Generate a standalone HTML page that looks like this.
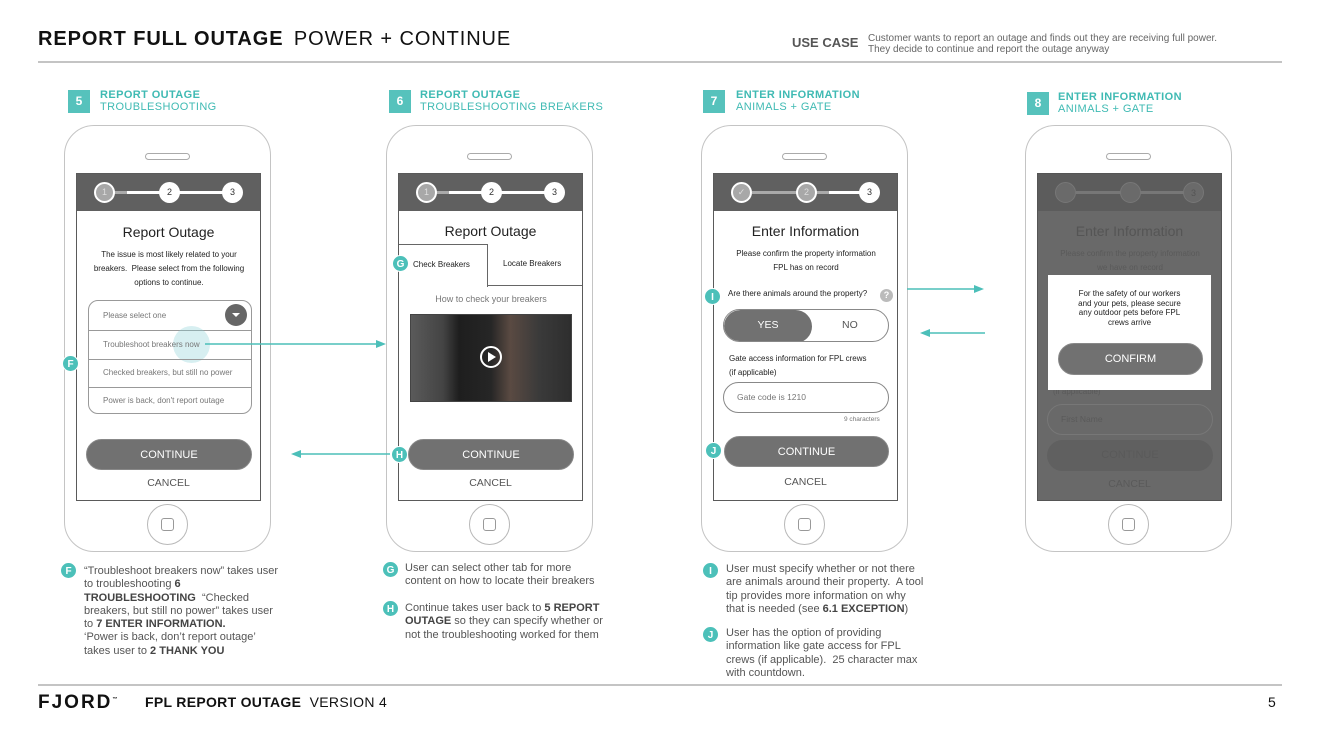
<!DOCTYPE html>
<html><head><meta charset="utf-8">
<style>
*{margin:0;padding:0;box-sizing:border-box}
body{width:1324px;height:745px;background:#fff;position:relative;overflow:hidden;font-family:"Liberation Sans",Arial,sans-serif;color:#333}
.a{position:absolute}
.c{text-align:center}
.sq{position:absolute;width:22px;height:23px;background:#56c2bc;color:#fff;font-weight:bold;font-size:12px;text-align:center;line-height:23px}
.hd{position:absolute;font-size:11px;line-height:12px;letter-spacing:.4px;color:#3fbab3}
.hd b{display:block}
.ph{position:absolute;top:125px;width:207px;height:427px;border:1px solid #c4c4c4;border-radius:30px}
.sp{position:absolute;top:153px;width:45px;height:7px;border:1px solid #aaa;border-radius:4px}
.hb{position:absolute;top:504px;width:41px;height:41px;border:1px solid #b8b8b8;border-radius:50%}
.hb i{position:absolute;left:13px;top:13px;width:13px;height:13px;border:1px solid #999;border-radius:3px}
.sc{position:absolute;top:173px;width:185px;height:328px;border:1px solid #5a5a5a;background:#fff;overflow:hidden}
.bar{position:absolute;left:0;top:0;width:100%;height:37px;background:#606060}
.st{position:absolute;top:8px;width:21px;height:21px;border-radius:50%;background:#fff;color:#333;font-size:9px;text-align:center;line-height:21px}
.st.g{background:#a8a8a8;color:#ddd;border:2px solid #fff;line-height:17px}
.ln{position:absolute;top:17px;height:3px;background:#fff}
.t{position:absolute;left:0;width:100%;text-align:center;font-size:14px;color:#222}
.s{position:absolute;font-size:8px;color:#222;line-height:14px}
.btn{position:absolute;height:31px;border-radius:16px;background:#717171;color:#fff;font-size:11px;text-align:center;line-height:31px;border:1px solid #888}
.cn{position:absolute;left:0;width:100%;text-align:center;font-size:10.5px;color:#555}
.bd{position:absolute;width:17px;height:17px;border-radius:50%;background:#4cc0b9;color:#fff;font-size:10px;font-weight:bold;text-align:center;line-height:17px;border:1px solid #fff}
.nt{position:absolute;font-size:11px;line-height:13.3px;color:#555}
.nt b{color:#444}
</style></head><body>

<div class="a" style="left:38px;top:28px;font-size:20px;font-weight:bold;color:#111;letter-spacing:.9px">REPORT FULL OUTAGE <span style="font-weight:normal;margin-left:4px">POWER + CONTINUE</span></div>
<div class="a" style="left:792px;top:35px;font-size:13px;font-weight:bold;color:#555">USE CASE</div>
<div class="a" style="left:868px;top:33px;font-size:10px;line-height:11px;color:#666">Customer wants to report an outage and finds out they are receiving full power.<br>They decide to continue and report the outage anyway</div>
<div class="a" style="left:38px;top:61px;width:1244px;height:2px;background:#c4c4c4"></div>

<div class="sq" style="left:68px;top:90px">5</div>
<div class="hd" style="left:100px;top:89px"><b>REPORT OUTAGE</b>TROUBLESHOOTING</div>
<div class="sq" style="left:389px;top:90px">6</div>
<div class="hd" style="left:420px;top:89px"><b>REPORT OUTAGE</b>TROUBLESHOOTING BREAKERS</div>
<div class="sq" style="left:703px;top:90px">7</div>
<div class="hd" style="left:736px;top:89px"><b>ENTER INFORMATION</b>ANIMALS + GATE</div>
<div class="sq" style="left:1027px;top:92px">8</div>
<div class="hd" style="left:1058px;top:91px"><b>ENTER INFORMATION</b>ANIMALS + GATE</div>

<div class="ph" style="left:64px"></div><div class="sp" style="left:145px"></div><div class="hb" style="left:147px"><i></i></div>
<div class="ph" style="left:386px"></div><div class="sp" style="left:467px"></div><div class="hb" style="left:469px"><i></i></div>
<div class="ph" style="left:701px"></div><div class="sp" style="left:782px"></div><div class="hb" style="left:784px"><i></i></div>
<div class="ph" style="left:1025px"></div><div class="sp" style="left:1106px"></div><div class="hb" style="left:1108px"><i></i></div>

<div class="sc" style="left:76px">
 <div class="bar">
  <div class="ln" style="left:36px;width:48px"></div><div class="ln" style="left:36px;width:14px;background:#aaa"></div><div class="ln" style="left:100px;width:48px"></div>
  <div class="st g" style="left:17px">1</div><div class="st" style="left:82px">2</div><div class="st" style="left:145px">3</div>
 </div>
 <div class="t" style="top:50px">Report Outage</div>
 <div class="s c" style="left:0;width:184px;top:74px">The issue is most likely related to your<br>breakers.&nbsp; Please select from the following<br>options to continue.</div>
 <div class="a" style="left:11px;top:126px;width:164px;height:114px;border:1px solid #999;border-radius:10px;font-size:8px;color:#777">
  <div class="a" style="left:14px;top:10px">Please select one</div>
  <div class="a" style="left:136px;top:3px;width:22px;height:22px;border-radius:50%;background:#666"><div class="a" style="left:7px;top:9px;border-left:4px solid transparent;border-right:4px solid transparent;border-top:4px solid #fff"></div></div>
  <div class="a" style="left:0;top:29px;width:100%;border-top:1px solid #999"></div>
  <div class="a" style="left:84px;top:25px;width:37px;height:37px;border-radius:50%;background:rgba(140,210,215,.35)"></div>
  <div class="a" style="left:14px;top:39px">Troubleshoot breakers now</div>
  <div class="a" style="left:0;top:58px;width:100%;border-top:1px solid #999"></div>
  <div class="a" style="left:14px;top:67px">Checked breakers, but still no power</div>
  <div class="a" style="left:0;top:86px;width:100%;border-top:1px solid #999"></div>
  <div class="a" style="left:14px;top:95px">Power is back, don't report outage</div>
 </div>
 <div class="btn" style="left:9px;top:265px;width:166px">CONTINUE</div>
 <div class="cn" style="top:303px">CANCEL</div>
</div>
<div class="bd" style="left:62px;top:355px">F</div>

<div class="sc" style="left:398px">
 <div class="bar">
  <div class="ln" style="left:36px;width:48px"></div><div class="ln" style="left:36px;width:14px;background:#aaa"></div><div class="ln" style="left:100px;width:48px"></div>
  <div class="st g" style="left:17px">1</div><div class="st" style="left:82px">2</div><div class="st" style="left:145px">3</div>
 </div>
 <div class="t" style="top:49px">Report Outage</div>
 <div class="a" style="left:0;top:70px;width:89px;height:43px;border-top:1px solid #666;border-right:1px solid #666;font-size:8px;color:#222;padding:15px 0 0 14px">Check Breakers</div>
 <div class="a" style="left:89px;top:111px;width:96px;border-top:1px solid #666"></div>
 <div class="a" style="left:104px;top:85px;font-size:8px;color:#222">Locate Breakers</div>
 <div class="a c" style="left:0;width:184px;top:120px;font-size:9px;color:#777">How to check your breakers</div>
 <div class="a" style="left:11px;top:140px;width:162px;height:88px;background:linear-gradient(90deg,#5a5a5a 0,#444 20%,#1e1e1e 30%,#262626 50%,#5a4a42 62%,#3a3a3a 80%,#2e2e2e 100%);border:1px solid #444">
  <div class="a" style="left:69px;top:31px;width:22px;height:22px;border:2px solid #fff;border-radius:50%"><div class="a" style="left:6px;top:4px;border-top:5px solid transparent;border-bottom:5px solid transparent;border-left:8px solid #fff"></div></div>
 </div>
 <div class="btn" style="left:9px;top:265px;width:166px">CONTINUE</div>
 <div class="cn" style="top:303px">CANCEL</div>
</div>
<div class="bd" style="left:392px;top:255px">G</div>
<div class="bd" style="left:391px;top:446px">H</div>

<svg class="a" style="left:0;top:0" width="1324" height="745">
 <g stroke="#4cbfb9" stroke-width="1.5" fill="#4cbfb9">
  <line x1="205" y1="344" x2="378" y2="344"/><polygon points="386,344 376,340 376,348" stroke="none"/>
  <line x1="390" y1="454" x2="300" y2="454"/><polygon points="291,454 301,450 301,458" stroke="none"/>
  <line x1="907" y1="289" x2="975" y2="289"/><polygon points="984,289 974,285 974,293" stroke="none"/>
  <line x1="985" y1="333" x2="929" y2="333"/><polygon points="920,333 930,329 930,337" stroke="none"/>
 </g>
</svg>

<div class="sc" style="left:713px">
 <div class="bar">
  <div class="ln" style="left:38px;width:46px;background:#aaa"></div><div class="ln" style="left:100px;width:48px;background:#aaa"></div><div class="ln" style="left:115px;width:33px"></div>
  <div class="st g" style="left:17px">✓</div><div class="st g" style="left:82px">2</div><div class="st" style="left:145px">3</div>
 </div>
 <div class="t" style="top:49px">Enter Information</div>
 <div class="s c" style="left:0;width:184px;top:73px">Please confirm the property information<br>FPL has on record</div>
 <div class="s" style="left:14px;top:113px">Are there animals around the property?</div>
 <div class="a" style="left:166px;top:115px;width:13px;height:13px;border-radius:50%;background:#bbb;color:#fff;font-size:9px;font-weight:bold;text-align:center;line-height:13px">?</div>
 <div class="a" style="left:9px;top:135px;width:166px;height:33px;border:1px solid #888;border-radius:17px;overflow:hidden">
  <div class="a" style="left:0;top:0;width:88px;height:33px;background:#717171;border-radius:17px;color:#fff;font-size:10.5px;text-align:center;line-height:31px">YES</div>
  <div class="a" style="left:118px;top:0;font-size:10.5px;color:#555;line-height:31px">NO</div>
 </div>
 <div class="s" style="left:15px;top:178px">Gate access information for FPL crews<br>(if applicable)</div>
 <div class="a" style="left:9px;top:208px;width:166px;height:31px;border:1px solid #888;border-radius:16px;font-size:8.5px;color:#777;padding:9px 0 0 13px">Gate code is 1210</div>
 <div class="a" style="left:130px;top:242px;font-size:6.5px;color:#777">9 characters</div>
 <div class="btn" style="left:10px;top:262px;width:165px">CONTINUE</div>
 <div class="cn" style="top:302px">CANCEL</div>
</div>
<div class="bd" style="left:704px;top:288px">I</div>
<div class="bd" style="left:705px;top:442px">J</div>

<div class="sc" style="left:1037px;background:#696969;border-color:#555">
 <div class="bar" style="background:#5c5c5c">
  <div class="ln" style="left:38px;width:46px;background:#777"></div><div class="ln" style="left:100px;width:48px;background:#777"></div>
  <div class="st" style="left:17px;background:#6a6a6a;border:1px solid #777"></div><div class="st" style="left:82px;background:#6a6a6a;border:1px solid #777"></div><div class="st" style="left:145px;background:#6a6a6a;border:1px solid #777;color:#555">3</div>
 </div>
 <div class="t" style="top:49px;color:#555">Enter Information</div>
 <div class="s c" style="left:0;width:184px;top:73px;color:#5a5a5a">Please confirm the property information<br>we have on record</div>
 <div class="s" style="left:15px;top:211px;color:#5a5a5a">(if applicable)</div>
 <div class="a" style="left:9px;top:230px;width:166px;height:31px;border:1px solid #777;border-radius:16px;font-size:8.5px;color:#5a5a5a;padding:9px 0 0 13px">First Name</div>
 <div class="a" style="left:9px;top:266px;width:166px;height:31px;border-radius:16px;background:#606060;color:#5a5a5a;font-size:11px;text-align:center;line-height:31px">CONTINUE</div>
 <div class="cn" style="top:304px;color:#5a5a5a">CANCEL</div>
 <div class="a" style="left:10px;top:101px;width:163px;height:115px;background:#fff">
  <div class="a c" style="left:0;width:163px;top:14px;font-size:8px;line-height:9.5px;color:#222">For the safety of our workers<br>and your pets, please secure<br>any outdoor pets before FPL<br>crews arrive</div>
  <div class="btn" style="left:10px;top:68px;width:145px;height:32px;line-height:30px">CONFIRM</div>
 </div>
</div>

<div class="bd" style="left:60px;top:562px">F</div>
<div class="nt" style="left:84px;top:565px">“Troubleshoot breakers now” takes user<br>to troubleshooting <b>6</b><br><b>TROUBLESHOOTING</b>&nbsp; “Checked<br>breakers, but still no power” takes user<br>to <b>7 ENTER INFORMATION.</b><br>‘Power is back, don’t report outage’<br>takes user to <b>2 THANK YOU</b></div>
<div class="bd" style="left:382px;top:561px">G</div>
<div class="nt" style="left:405px;top:562px">User can select other tab for more<br>content on how to locate their breakers</div>
<div class="bd" style="left:382px;top:600px">H</div>
<div class="nt" style="left:405px;top:602px">Continue takes user back to <b>5 REPORT<br>OUTAGE</b> so they can specify whether or<br>not the troubleshooting worked for them</div>
<div class="bd" style="left:702px;top:562px">I</div>
<div class="nt" style="left:726px;top:563px">User must specify whether or not there<br>are animals around their property.&nbsp; A tool<br>tip provides more information on why<br>that is needed (see <b>6.1 EXCEPTION</b>)</div>
<div class="bd" style="left:702px;top:626px">J</div>
<div class="nt" style="left:726px;top:627px">User has the option of providing<br>information like gate access for FPL<br>crews (if applicable).&nbsp; 25 character max<br>with countdown.</div>

<div class="a" style="left:38px;top:684px;width:1244px;height:2px;background:#c4c4c4"></div>
<div class="a" style="left:38px;top:692px;font-size:19px;font-weight:bold;color:#111;letter-spacing:2px">FJORD<sup style="font-size:5px">™</sup></div>
<div class="a" style="left:145px;top:694px;font-size:14px;color:#111;letter-spacing:.3px"><b>FPL REPORT OUTAGE</b>&nbsp; VERSION 4</div>
<div class="a" style="left:1268px;top:694px;font-size:14px;color:#111">5</div>
</body></html>
